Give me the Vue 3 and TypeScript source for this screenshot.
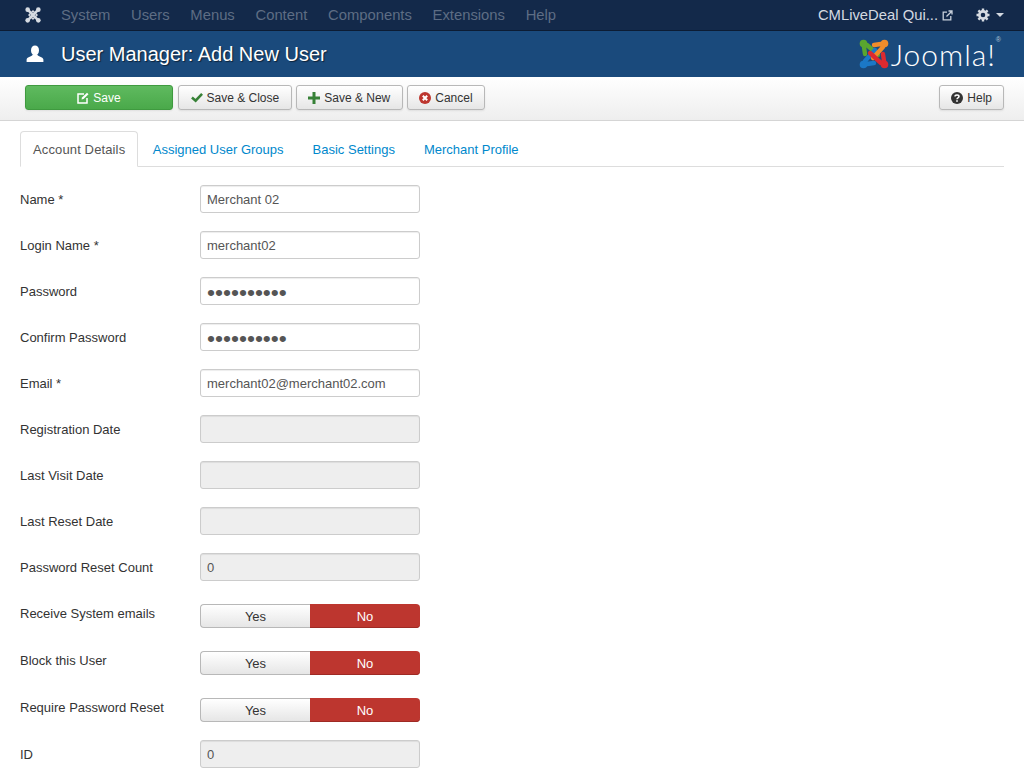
<template>
  <div class="page">
    <nav class="navbar">
      <svg class="brand" width="16" height="16" viewBox="0 0 18 18">
        <g fill="none" stroke="#d6dbe2" stroke-width="3" stroke-linecap="round">
          <path d="M3 3 L15 15 M15 3 L3 15" />
          <path d="M4.5 9 L9 4.5 L13.5 9 L9 13.5 Z" stroke-width="1.6" />
        </g>
        <circle cx="3" cy="3" r="2.6" fill="#d6dbe2" />
        <circle cx="15" cy="3" r="2.6" fill="#d6dbe2" />
        <circle cx="3" cy="15" r="2.6" fill="#d6dbe2" />
        <circle cx="15" cy="15" r="2.6" fill="#d6dbe2" />
      </svg>
      <ul class="menu">
        <li v-for="m in menus" :key="m">{{ m }}</li>
      </ul>
      <div class="nav-right">
        <span class="site">CMLiveDeal Qui...</span>
        <svg class="ext" width="11" height="11" viewBox="0 0 11 11" fill="none" stroke="#c9d1dc" stroke-width="1.3">
          <path d="M5 2.2 H1.2 V9.8 H8.8 V6" />
          <path d="M4.5 6.5 L9.8 1.2 M6.5 1 H10 V4.5" />
        </svg>
        <svg class="gear" width="14" height="14" viewBox="0 0 14 14">
          <circle cx="7" cy="7" r="3.6" fill="none" stroke="#d6dbe2" stroke-width="2.6" />
          <path d="M7 0.5 V3 M7 11 V13.5 M0.5 7 H3 M11 7 H13.5 M2.4 2.4 L4.1 4.1 M9.9 9.9 L11.6 11.6 M11.6 2.4 L9.9 4.1 M4.1 9.9 L2.4 11.6" stroke="#d6dbe2" stroke-width="2.4" />
        </svg>
        <span class="caret"></span>
      </div>
    </nav>

    <header class="title-bar">
      <svg class="user-icon" width="18" height="18" viewBox="0 0 18 18" fill="#fff">
        <ellipse cx="9" cy="5.4" rx="4" ry="5" />
        <path d="M6.6 9.5 C6.6 11.4 1 11.6 0.6 14.6 V17 H17.4 V14.6 C17 11.6 11.4 11.4 11.4 9.5 Z" />
      </svg>
      <h1>User Manager: Add New User</h1>
      <div class="logo">
        <svg width="32" height="32" viewBox="0 0 32 32" fill="none" stroke-width="4.4" stroke-linejoin="round" stroke-linecap="round">
          <g v-for="p in logoParts" :key="p.color" :transform="`rotate(${p.angle} 16 16)`">
            <path d="M7 16 L5.5 5.5 L9 7 L20 17" :stroke="p.color" />
            <circle cx="5.5" cy="5.5" r="3.8" :fill="p.color" />
          </g>
        </svg>
        <span class="logo-text">Joomla!</span>
        <sup class="reg">®</sup>
      </div>
    </header>

    <div class="toolbar">
      <button class="btn btn-save" type="button">
        <svg width="12" height="12" viewBox="0 0 12 12" fill="none" stroke="#fff" stroke-width="1.5">
          <path d="M7 2 H1 V11 H10 V6" />
          <path d="M4.5 7.5 L5 5.5 L10 0.8 L11.5 2.2 L6.5 7 Z" fill="#fff" stroke="none" />
        </svg>
        Save
      </button>
      <button class="btn" type="button">
        <svg width="12" height="11" viewBox="0 0 13 11" fill="none" stroke="#378137" stroke-width="2.8">
          <path d="M1 5.5 L5 9 L12 1.5" />
        </svg>
        Save &amp; Close
      </button>
      <button class="btn" type="button">
        <svg width="12" height="12" viewBox="0 0 12 12" fill="#378137">
          <path d="M4.5 0 H7.5 V4.5 H12 V7.5 H7.5 V12 H4.5 V7.5 H0 V4.5 H4.5 Z" />
        </svg>
        Save &amp; New
      </button>
      <button class="btn" type="button">
        <svg width="12" height="12" viewBox="0 0 12 12">
          <circle cx="6" cy="6" r="6" fill="#bd362f" />
          <path d="M3.8 3.8 L8.2 8.2 M8.2 3.8 L3.8 8.2" stroke="#fff" stroke-width="2" />
        </svg>
        Cancel
      </button>
      <button class="btn btn-help" type="button">
        <svg width="12" height="12" viewBox="0 0 12 12">
          <circle cx="6" cy="6" r="6" fill="#333" />
          <path d="M4 4.6 C4 2.4 8 2.4 8 4.6 C8 6 6 5.8 6 7.2" fill="none" stroke="#fff" stroke-width="1.5" />
          <rect x="5.2" y="8.2" width="1.6" height="1.6" fill="#fff" />
        </svg>
        Help
      </button>
    </div>

    <main class="content">
      <div class="tabs">
        <a v-for="(t, i) in tabs" :key="t" class="tab" :class="{ active: i === 0 }">{{ t }}</a>
      </div>

      <form class="form">
        <template v-for="f in fields" :key="f.label">
          <div v-if="f.kind === 'toggle'" class="row toggle-row">
            <label>{{ f.label }}</label>
            <div class="toggle">
              <span class="yes">Yes</span>
              <span class="no">No</span>
            </div>
          </div>
          <div v-else class="row">
            <label>{{ f.label }}</label>
            <input
              :class="{ off: f.kind === 'off', dots: f.kind === 'password' }"
              :type="f.kind === 'password' ? 'password' : 'text'"
              :value="f.value"
              :readonly="f.kind === 'off'"
            />
          </div>
        </template>
      </form>
    </main>
  </div>
</template>

<script setup lang="ts">
type Field = {
  label: string
  kind: 'text' | 'password' | 'off' | 'toggle'
  value?: string
}

const menus = ['System', 'Users', 'Menus', 'Content', 'Components', 'Extensions', 'Help']
const tabs = ['Account Details', 'Assigned User Groups', 'Basic Settings', 'Merchant Profile']

const logoParts = [
  { color: '#5aa62e', angle: 0 },
  { color: '#1b78c6', angle: 270 },
  { color: '#f08c2a', angle: 90 },
  { color: '#dc2a30', angle: 180 },
]

const fields: Field[] = [
  { label: 'Name *', kind: 'text', value: 'Merchant 02' },
  { label: 'Login Name *', kind: 'text', value: 'merchant02' },
  { label: 'Password', kind: 'password', value: 'merchant02' },
  { label: 'Confirm Password', kind: 'password', value: 'merchant02' },
  { label: 'Email *', kind: 'text', value: 'merchant02@merchant02.com' },
  { label: 'Registration Date', kind: 'off', value: '' },
  { label: 'Last Visit Date', kind: 'off', value: '' },
  { label: 'Last Reset Date', kind: 'off', value: '' },
  { label: 'Password Reset Count', kind: 'off', value: '0' },
  { label: 'Receive System emails', kind: 'toggle' },
  { label: 'Block this User', kind: 'toggle' },
  { label: 'Require Password Reset', kind: 'toggle' },
  { label: 'ID', kind: 'off', value: '0' },
]
</script>

<style>
html, body { background: #fff; overflow: hidden; }
</style>

<style scoped>
.page {
  height: 780px;
  overflow: hidden;
  font-family: "Liberation Sans", Arial, sans-serif;
  font-size: 13px;
  color: #333;
}
.navbar {
  height: 30px;
  display: flex;
  align-items: center;
  padding: 0 20px 0 25px;
  background: #13294a;
  border-bottom: 1px solid #0c1c33;
}
.brand { flex: none; }
.menu {
  display: flex;
  gap: 20.7px;
  list-style: none;
  margin: 0 0 0 20px;
  padding: 0;
  font-size: 14.8px;
  color: #5e6d84;
}
.nav-right {
  margin-left: auto;
  display: flex;
  align-items: center;
  font-size: 14.8px;
  color: #d3d9e1;
}
.ext { margin-left: 4px; }
.gear { margin-left: 23px; }
.caret {
  margin-left: 6px;
  border-left: 4px solid transparent;
  border-right: 4px solid transparent;
  border-top: 4px solid #d3d9e1;
}
.title-bar {
  height: 46px;
  display: flex;
  align-items: center;
  padding: 0 28px 0 26px;
  background: #1a4a7c;
  color: #fff;
}
.user-icon { flex: none; }
.title-bar h1 {
  margin: 0 0 0 17px;
  font-size: 20px;
  font-weight: 400;
  line-height: 46px;
  text-shadow: 1px 1px 1px rgba(0, 0, 0, .55);
}
.logo {
  margin-left: auto;
  display: flex;
  align-items: center;
  height: 46px;
  position: relative;
}
.logo-text {
  margin-left: 1px;
  font-family: Lato, "Noto Sans", sans-serif;
  font-weight: 300;
  font-size: 30px;
  letter-spacing: 1px;
  line-height: 1;
}
.reg {
  font-size: 7px;
  position: absolute;
  right: -5px;
  top: 5px;
  color: #b8c6d6;
}
.toolbar {
  height: 35px;
  display: flex;
  align-items: flex-start;
  gap: 4px;
  padding: 8px 20px 0 25px;
  background: linear-gradient(#fff, #eee);
  border-bottom: 1px solid #d5d5d5;
}
.btn {
  height: 25px;
  padding: 0 11.5px;
  display: inline-flex;
  align-items: center;
  justify-content: center;
  gap: 4px;
  font: inherit;
  font-size: 12px;
  color: #333;
  background: linear-gradient(#fff, #e6e6e6);
  border: 1px solid #b8b8b8;
  border-radius: 3px;
  box-shadow: 0 1px 2px rgba(0, 0, 0, .08);
  white-space: nowrap;
}
.btn-save {
  width: 148px;
  margin-right: 1px;
  color: #fff;
  background: linear-gradient(#5fba5f, #4aa94a);
  border-color: #3f9a3f;
}
.btn-help { margin-left: auto; padding: 0 11px; }
.content { padding: 10px 20px 0; }
.tabs {
  display: flex;
  height: 35px;
  border-bottom: 1px solid #ddd;
}
.tab {
  height: 36px;
  box-sizing: border-box;
  line-height: 35px;
  padding: 0 13.5px;
  color: #08c;
  border: 1px solid transparent;
  white-space: nowrap;
}
.tab.active {
  padding: 0 12px;
  letter-spacing: .13px;
  color: #555;
  background: #fff;
  border-color: #ddd;
  border-bottom-color: #fff;
  border-radius: 4px 4px 0 0;
}
.form { padding-top: 18px; }
.row {
  display: flex;
  align-items: center;
  height: 28px;
  margin-bottom: 18px;
}
.row label { width: 180px; flex: none; }
.row input {
  width: 220px;
  height: 28px;
  box-sizing: border-box;
  padding: 0 6px;
  font: inherit;
  color: #555;
  background: #fff;
  border: 1px solid #ccc;
  border-radius: 3px;
  box-shadow: inset 0 1px 1px rgba(0, 0, 0, .075);
  outline: none;
}
.row input.off { background: #eee; }
.row input.dots { font-size: 22.8px; padding-top: 2px; }
.toggle-row {
  height: 24px;
  margin-top: 23px;
  align-items: flex-start;
}
.toggle-row label { line-height: 20px; }
.toggle {
  width: 220px;
  height: 24px;
  display: flex;
  text-align: center;
}
.toggle span { width: 110px; box-sizing: border-box; }
.yes {
  background: linear-gradient(#fff, #e6e6e6);
  border: 1px solid #b8b8b8;
  border-right: 0;
  border-radius: 4px 0 0 4px;
  line-height: 24px;
}
.no {
  color: #fff;
  line-height: 26px;
  background: #bd362f;
  border-radius: 0 4px 4px 0;
  box-shadow: inset 0 -1px 0 #9e2a24;
}
</style>
